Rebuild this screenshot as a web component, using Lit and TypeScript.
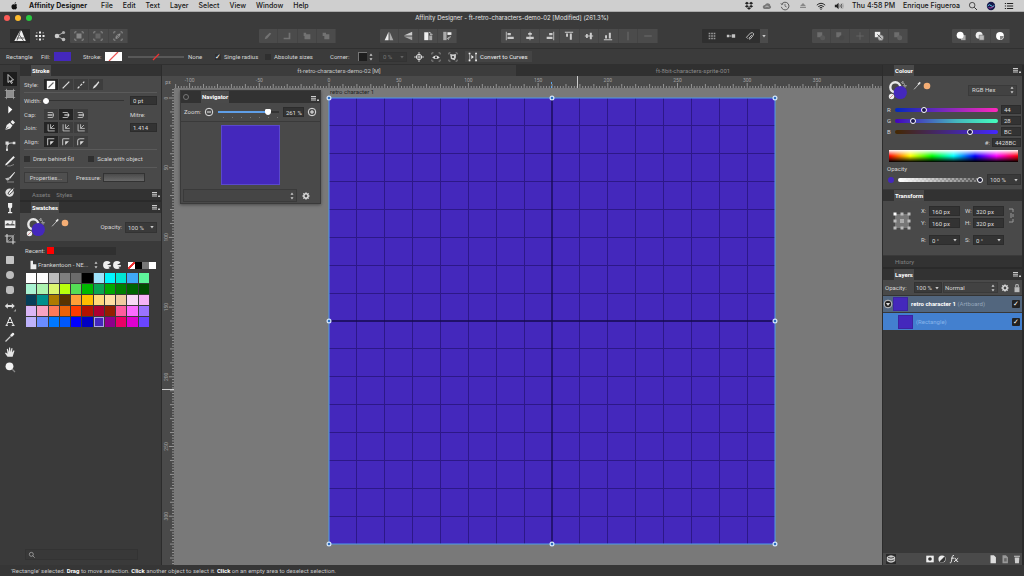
import { LitElement, html, svg, css } from "lit";
import { customElement } from "lit/decorators.js";
import { styleMap } from "lit/directives/style-map.js";
import { classMap } from "lit/directives/class-map.js";

const icon = (body: unknown, box = 12, size = "i12") =>
  html`<svg class="icon ${size}" viewBox="0 0 ${box} ${box}" aria-hidden="true">${body}</svg>`;

const MENUS = ["File", "Edit", "Text", "Layer", "Select", "View", "Window", "Help"];

const PALETTE = [
  "#ffffff", "#fdfdfd", "#bdbdbd", "#7f7f7f", "#6b6b6b", "#000000", "#9fe3fb", "#00f6ff", "#00e6d2", "#3fa9f8", "#5ef59b",
  "#a9f3d2", "#adf3b0", "#dcf66f", "#b9ff0c", "#55dd55", "#00b800", "#0aa552", "#00a800", "#007f00", "#006400", "#004b00",
  "#063f59", "#008f8c", "#ad7b00", "#5a3300", "#ff9f38", "#ffbd00", "#ffd97a", "#ffdfa3", "#f0cba0", "#f8d8f6", "#f5b3f6",
  "#dab6f6", "#f9a3c2", "#ff7a57", "#ea6209", "#ff3a00", "#b31200", "#ab0030", "#931f00", "#ff5b9f", "#fa6bff", "#9a73ff",
  "#bdb2fb", "#6a8cff", "#0078ff", "#0058ff", "#0000ff", "#0000c2", "#4428bc", "#8d008a", "#ea0066", "#dd00cf", "#6a45ff",
];

const shape = (fill: string) => svg`<rect x="2" y="2" width="8" height="8" rx=".8" fill=${fill} />`;

const TOOLS: { name: string; body: unknown }[][] = [
  [
    { name: "Move", body: svg`<path d="M4 1.5v8l2-1.8 1.4 2.8 1-.6L7 7.300l2.500-.3z" fill="#111" stroke="#ddd" stroke-width=".9" />` },
    { name: "Artboard", body: svg`<path d="M2.500 2.500h7v7h-7z" fill="#8f8f8f" /><path d="M2.500 .8v10.400M9.500 .8v10.400M.8 2.500h10.400M.8 9.500h10.400" stroke="#aaa" stroke-width=".7" />` },
    { name: "Node", body: svg`<path d="M4.300 2v7.500l4-4z" fill="#fff" />` },
    { name: "Pen", body: svg`<path d="M1.300 11l1.400-5 3-2.200 2.800 2.700-2.200 3z" fill="#eee" /><path d="M1.500 10.800l3-3" stroke="#333" stroke-width=".7" /><path d="M6.500 3l2-2 2.500 2.500-2 2z" fill="#eee" />` },
  ],
  [
    { name: "Corner", body: svg`<path d="M3 11V7q0-4 4-4h3" fill="none" stroke="#ccc" stroke-width="1.200" /><path d="M1.500 1.500h3.200v3.200H1.500zM8.800 1.700h2.600v2.600H8.800zM2 8.800h2v2H2z" fill="#ddd" />` },
    { name: "Pencil", body: svg`<path d="M1.500 9L9.500 1l1.300 1.500-8 7.500-1.500.6z" fill="#eee" /><path d="M3 11q3 .6 7-1.500" fill="none" stroke="#999" stroke-width=".8" />` },
    { name: "Vector brush", body: svg`<path d="M5 6.800L10.500 1l.6.600-5 6.200z" fill="#eee" /><path d="M1 7.500l2 2q2 .5 2.800-1.700L4.600 6.600z" fill="#bbb" /><path d="M3 11h7" stroke="#999" stroke-width=".8" />` },
    { name: "Paint brush", body: svg`<circle cx="5.600" cy="6.600" r="4.200" fill="#ddd" /><path d="M4 7.500q1-3 6.500-6.500-.5 5-5 7.500z" fill="#eee" stroke="#333" stroke-width=".9" />` },
    { name: "Fill", body: svg`<path d="M4 1h4.200v3.600q0 1.600-1.400 2V10h1.400v1.200H4V10h1.300V6.600q-1.300-.4-1.300-2z" fill="#eee" />` },
    { name: "Place image", body: svg`<path d="M.8 2.500h10.600v7.500H.8z" fill="#eee" /><path d="M1.500 6.500l2.200-1.500 2.300 1.500 2-1.200 2.700 1.200v.9H1.500z" fill="#555" /><circle cx="8.500" cy="4" r=".8" fill="#555" />` },
    { name: "Crop", body: svg`<path d="M3 1v8h8.500M.8 3H9v8.300" fill="none" stroke="#ccc" stroke-width="1.200" /><path d="M3.500 8.500l7-7" stroke="#999" stroke-width=".7" />` },
  ],
  [
    { name: "Rectangle", body: shape("#c4c4c4") },
    { name: "Ellipse", body: svg`<circle cx="6" cy="6" r="4" fill="#bdbdbd" />` },
    { name: "Rounded rectangle", body: svg`<rect x="2" y="2" width="8" height="8" rx="2.400" fill="#bdbdbd" />` },
    { name: "Arrow shape", body: svg`<path d="M.8 6l3-2.800v1.900h4V3.200l3 2.800-3 2.800V7H3.800v1.800z" fill="#ddd" /><path d="M12 9v2.500H9.500z" fill="#999" />` },
    { name: "Text", body: svg`<path d="M6 2L2.500 10.300M6 2l3.500 8.300M3.700 7.500h4.600M1.600 10.400h2.300M7.800 10.400h2.800" fill="none" stroke="#eee" stroke-width="1" />` },
    { name: "Colour picker", body: svg`<path d="M1.500 10.500L6.500 5.500" stroke="#ccc" stroke-width="1.300" /><path d="M6 4.200l1.800 1.800L10.300 3.500 9.900 1.900 8.500 1.700z" fill="#eee" />` },
    { name: "View", body: svg`<path d="M3.500 10.800L1 7.200l.8-.7 1.700 1.200L2.800 3l1-.3L4.900 6 5 1.500h1.100L6.400 6l1.100-4 1 .3L8 6.500l1.700-2.300.8.500L8.600 10.800z" fill="#e6e6e6" />` },
    { name: "Zoom", body: svg`<circle cx="5.500" cy="5.300" r="3.900" fill="#f2f2f2" /><path d="M8 8l3 3" stroke="#888" stroke-width="1.300" />` },
  ],
];

const marquee = svg`<path d="M1 3V1h2M9 1h2v2M11 9v2H9M3 11H1V9" fill="none" stroke="#aaa" stroke-width=".8" />`;
const PX = 1.394;

@customElement("app-root")
export class AppRoot extends LitElement {
  static styles = css`
    :host {
      display: grid;
      grid-template-rows: 12px 12px 25px 16px minmax(0, 1fr) 11px;
      height: 100vh;
      overflow: hidden;
      background: #3a3a3a;
      color: #d6d6d6;
      font: 6px/8px Roboto, "Liberation Sans", sans-serif;
    }
    * { box-sizing: border-box; }
    button, input, select { font: inherit; color: inherit; margin: 0; border: 0; border-radius: 0; padding: 0; background: none; }
    button { display: flex; align-items: center; justify-content: center; }
    select { appearance: none; }
    p, h1, ul { margin: 0; padding: 0; font: inherit; }
    .icon { display: block; flex: none; }
    .i8 { width: 8px; height: 8px; }
    .i10 { width: 10px; height: 10px; }
    .i12 { width: 12px; height: 12px; }
    .i18 { width: 18px; height: 18px; }
    .i20 { width: 20px; height: 20px; }
    .grow { flex: 1; }
    .row { display: flex; align-items: center; }

    .menubar { display: flex; align-items: center; background: #cfcfcf; color: #161616; font: 500 7px/12px Inter, sans-serif; padding: 0 10px 0 9px; border-bottom: 1px solid #aaa; }
    .menubar button { padding: 0 5px; }
    .menubar .app { font-weight: 700; margin: 0 4px 0 5px; }
    .menubar .status { display: flex; align-items: center; gap: 8px; }

    .titlebar { display: grid; grid-template-columns: 1fr auto 1fr; align-items: center; background: #3b3b3b; color: #e4e4e4; }
    .titlebar h1 { font: 6px/8px Inter, sans-serif; }
    .lights { display: flex; gap: 5px; padding-left: 4px; }
    .light { width: 6px; height: 6px; border-radius: 50%; }
    .red { background: #fc5b57; }
    .amber { background: #fdbc2e; }
    .green { background: #28c840; }

    .toolbar { display: flex; align-items: center; background: #3b3b3b; padding: 0 14px 0 10px; border-bottom: 1px solid #303030; }
    .persona { width: 20px; height: 14px; }
    .persona.on { background: #2a2a2a; }
    .group { display: flex; height: 14px; background: #4b4b4b; border-radius: 1px; }
    .group button { flex: 1; border-right: 1px solid #444; }
    .group.dark { background: #2f2f2f; }
    .group.dark button { border: 0; }
    .faded .icon, .faint { opacity: .3; }
    .w3 { width: 58px; }
    .w4 { width: 77px; }
    .w5 { width: 96px; }
    .w8 { width: 157px; }
    .gap { width: 44px; }
    .drop { width: 8px; height: 14px; background: #4b4b4b; }

    .context { display: flex; align-items: center; padding-left: 6px; background: #3b3b3b; border-bottom: 1px solid #303030; }
    .context .name { width: 35px; }
    .context .fill-label { width: 13px; }
    .context .stroke-label { width: 22px; }
    .chip { width: 17px; height: 9px; }
    .chip.fill { background: #4428bc; margin-right: 12px; }
    .none { background: #fff; }
    .line { width: 56px; height: 8px; margin: 0 4px 0 6px; display: block; }
    .context .none-label { width: 27px; }
    .tick { display: flex; align-items: center; gap: 3px; }
    .tick input { appearance: none; width: 6px; height: 6px; background: #2f2f2f; display: grid; place-items: center; }
    .tick input:checked::after { content: "✓"; font: 700 7px/6px "DejaVu Sans", sans-serif; color: #fff; }
    .single { width: 50px; }
    .absolute { width: 65px; }
    .corner-label { width: 28px; }
    .corner { width: 9px; height: 9px; background: #1e1e1e; border-top: 1px solid #777; border-left: 1px solid #777; }
    .steps { width: 12px; }
    .percent { width: 28px; height: 10px; padding-left: 3px; background: #363636; color: #777; border: 1px solid #333; }
    .context .tool { width: 17px; height: 11px; }
    .convert { gap: 2px; padding: 0 4px 0 3px; height: 11px; background: #444; margin-left: 4px; color: #eee; }
    .tools-gap { width: 3px; }

    .work { display: grid; grid-template-columns: 20px 142px minmax(0, 1fr) 142px; min-height: 0; }
    .tools { display: flex; flex-direction: column; gap: 5px; padding-top: 6px; background: #3a3a3a; }
    .tools div { display: grid; grid-auto-rows: 1fr; justify-items: center; align-items: center; }
    .g0 { height: 62px; }
    .g1 { height: 109px; }
    .g2 { height: 123px; }
    .tools button { width: 14px; height: 14px; }
    .tools button.on { background: #1d1d1d; }

    .studio { display: flex; flex-direction: column; min-height: 0; min-width: 0; background: #3a3a3a; border-right: 1px solid #2c2c2c; }
    .tabs { display: flex; align-items: stretch; height: 11px; background: #323232; padding-left: 11px; color: #858585; flex: none; }
    .tabs button { padding: 0 1px; margin-right: 4px; }
    .tabs button.on { background: #4a4a4a; color: #fff; font-weight: 700; }
    .studio .tabs + .tabs { border-top: 2px solid #2a2a2a; height: 13px; }
    .split { height: 1px; background: #5a5a5a; margin: 0 4px; flex: none; }
    .panel { background: #494949; flex: none; }
    .stroke { padding: 1px 4px 0; height: 113px; }
    .stroke .label { width: 20px; }
    .stroke .row { height: 13px; }
    .stroke .row.top { height: 15px; }
    .stroke .row.wide { height: 17px; }
    .stroke .row.width { height: 15px; gap: 2px; }
    .stroke .row.base { height: 19px; }
    .stroke .split { margin: 0; }
    .seg { display: flex; height: 11px; background: #3d3d3d; }
    .seg button { width: 15px; border-right: 1px solid #494949; }
    .seg button.on { background: #252525; }
    .field { height: 9px; background: #333; border: 1px solid #2c2c2c; padding-left: 2px; color: #ddd; min-width: 0; }
    .w27 { width: 27px; }
    .push { background: #4f4f4f; border: 1px solid #3b3b3b; height: 11px; width: 44px; }
    .pressure { width: 42px; height: 9px; background: linear-gradient(#4a4a4a, #696969); border: 1px solid #333; margin-left: 2px; }
    .pressure-label { margin-left: 8px; }

    input[type="range"] { appearance: none; height: 4px; min-width: 0; }
    input[type="range"]::-webkit-slider-thumb { appearance: none; width: 6px; height: 6px; border-radius: 50%; border: 1px solid #fff; background: rgba(20, 20, 50, .8); }
    input.plain { flex: 1; height: 7px; background: linear-gradient(#333, #333) center / 100% 1px no-repeat; margin-right: 4px; }
    input.plain::-webkit-slider-thumb { background: #fff; }

    .wells { display: flex; align-items: center; margin-left: 4px; padding-bottom: 9px; }
    .swatch-top { display: flex; align-items: center; height: 28px; padding: 0 4px 0 6px; }
    .pct { height: 11px; width: 32px; padding-left: 2px; background: #3a3a3a; border: 1px solid #333; }
    .swatches { flex: 1; display: flex; flex-direction: column; padding: 5px 4px 5px 5px; }
    .recent { display: flex; align-items: center; height: 10px; }
    .recent .bar { width: 69px; height: 8px; background: #303030; margin-left: 2px; }
    .recent i { display: block; width: 7px; height: 7px; background: #f00; }
    .library { display: flex; align-items: center; height: 12px; margin: 3px 0 2px; padding: 0 1px 0 3px; }
    .library select { width: 54px; height: 10px; }
    .library .mini { display: flex; margin-left: 6px; }
    .mini i { width: 7px; height: 7px; }
    .palette { display: grid; grid-template-columns: repeat(11, 1fr); grid-auto-rows: 10px; gap: 1px; width: 123px; margin-left: 1px; }
    .palette button.picked { outline: 1px solid #a9a4e6; outline-offset: -1px; }
    .search { display: flex; align-items: center; height: 11px; width: 113px; padding-left: 2px; background: #383838; border: 1px solid #333; }
    .search input { flex: 1; min-width: 0; }

    .doc { display: grid; grid-template: 11px 12px minmax(0, 1fr) / 12px minmax(0, 1fr); min-width: 0; min-height: 0; }
    .doctabs { grid-column: 1 / -1; display: flex; background: #303030; color: #8a8a8a; padding-right: 12px; }
    .doctabs button { flex: 1; }
    .doctabs button.on { background: #3c3c3c; color: #c4c4c4; }
    .unit { background: #4a4a4a; color: #aaa; font-size: 5px; text-align: center; line-height: 12px; }
    .ruler { background: #4a4a4a; width: 100%; height: 100%; display: block; overflow: hidden; }
    .ruler text { fill: #a4a4a4; font: 5px Roboto, sans-serif; }
    .canvas { position: relative; overflow: hidden; background: #797979; }
    .artboard { position: absolute; left: 151px; top: 6px; width: 454px; height: 454px; display: block; }
    .boardname { position: absolute; left: 156px; top: 0; color: #1f1f1f; }
    .navigator { position: absolute; left: 6px; top: 2px; width: 141px; background: #494949; border: 1px solid #3a3a3a; box-shadow: 0 1px 3px rgba(0, 0, 0, .4); }
    .navigator .tabs { padding-left: 1px; gap: 4px; height: 12px; }
    .navigator .tabs .icon { margin-top: 2px; }
    .navigator .tabs .dot { width: 3px; }
    .zoomrow { display: flex; align-items: center; height: 19px; padding: 0 3px; border-bottom: 1px solid #3a3a3a; }
    .zoomrow .label { width: 21px; }
    .zoomrow input[type="range"] {
      width: 64px; height: 11px; margin: 0 4px;
      background:
        linear-gradient(90deg, #5f9fe8 80%, #333 80%) center / 100% 2px no-repeat,
        repeating-linear-gradient(90deg, transparent 0 5px, #777 5px 6px, transparent 6px 9px) bottom / 100% 1px no-repeat;
    }
    .zoomrow input[type="range"]::-webkit-slider-thumb { border-radius: 1px 1px 3px 3px; background: #fff; }
    .zoomrow .field { width: 22px; height: 10px; margin-right: 3px; }
    .preview { display: grid; place-items: center; height: 66px; }
    .preview i { display: block; width: 59px; height: 60px; background: #4428bc; border: 1px solid #5a49cc; }
    .navfoot { display: flex; align-items: center; gap: 4px; padding: 1px 2px; }
    .navfoot select { width: 114px; height: 13px; background: #454545; border: 1px solid #3a3a3a; }
    .overlay { display: grid; align-items: center; justify-items: end; }
    .overlay > * { grid-area: 1 / 1; }
    .overlay .icon { pointer-events: none; margin-right: 1px; }

    .right { border-left: 1px solid #2c2c2c; border-right: 2px solid #2a2a2a; }
    .colour { height: 113px; padding: 0 1px 0 4px; margin-bottom: 1px; }
    .colour .head { display: flex; align-items: center; height: 28px; padding: 0 4px 0 1px; }
    .modes { width: 49px; height: 11px; padding-left: 3px; background: #424242; border: 1px solid #3a3a3a; }
    .channel { display: grid; grid-template-columns: 7px 1fr 20px; column-gap: 1px; align-items: center; height: 11px; }
    .channel .field { width: 20px; }
    .channel input[type="range"] { width: 103px; border-radius: 2px; }
    .ch-r { background: linear-gradient(90deg, #0028bc, #ff28bc); }
    .ch-g { background: linear-gradient(90deg, #4400bc, #44b8bc 60%, #44ffbc); }
    .ch-b { background: linear-gradient(90deg, #442800, #4428ff); }
    .hex { display: flex; align-items: center; justify-content: flex-end; gap: 2px; height: 11px; }
    .hex .field { width: 29px; }
    .spectrum { height: 12px; margin: 2px 3px 3px 2px; background: linear-gradient(#fff, transparent 50%, #000), linear-gradient(90deg, red, #ff0, lime, cyan, blue, #f0f, red); }
    .oplabel { height: 9px; }
    .oprow { display: flex; align-items: center; height: 11px; gap: 4px; padding-left: 1px; }
    .oprow b { width: 6px; height: 6px; border-radius: 50%; background: #4428bc; }
    .oprow input[type="range"] { flex: 1; border-radius: 2px; background: linear-gradient(90deg, #fff, transparent), repeating-conic-gradient(#777 0 25%, #444 0 50%) 0 0 / 4px 4px; }
    .oprow .pct { width: 34px; }
    .transform { display: grid; grid-template-columns: 24px 44px 44px 1fr; height: 54px; padding: 5px 0 0 9px; align-items: start; margin-bottom: 1px; }
    .transform .pair { display: grid; gap: 2px; }
    .transform label { display: grid; grid-template-columns: 8px 31px; align-items: center; height: 10px; justify-content: end; }
    .transform label .field { height: 10px; width: 31px; }
    .transform label:last-child { margin-top: 5px; }
    .transform .anchor { margin-top: 5px; }
    .blend { display: flex; align-items: center; height: 16px; padding-left: 2px; gap: 1px; border-bottom: 1px solid #333; }
    .blend .label { width: 28px; }
    .blend .pct { width: 28px; padding-left: 1px; }
    .blend .mode { width: 55px; height: 11px; padding-left: 1px; background: #424242; border: 1px solid #3a3a3a; }
    .blend > .icon { margin-left: 1px; }
    .layers { flex: 1; list-style: none; background: #383838; }
    .layers li { display: flex; align-items: center; height: 16px; margin-bottom: 1px; padding: 0 2px 0 0; background: #52667e; }
    .layers li.child { background: #4380cf; padding-left: 15px; height: 17px; }
    .layers i { display: block; width: 15px; height: 14px; background: #4428bc; margin: 0 3px 0 0; border: 1px solid #3b25a0; }
    .layers strong { color: #fff; }
    .layers span { color: #95a7bc; }
    .layers .child span { color: #86b4ea; }
    .layers .tick input { width: 8px; height: 8px; background: #222; border-radius: 1px; }
    .foot { display: flex; align-items: center; height: 12px; padding: 0 0 0 3px; background: #4a4a4a; gap: 2px; }
    .foot .left { background: #2b2b2b; }

    .statusbar { display: flex; align-items: center; padding-left: 11px; background: #363636; color: #c8c8c8; }
    .statusbar b { color: #fff; }
  `;

  private steps() {
    return icon(svg`<path d="M4 .5l1.500 2.200h-3zM4 7.500L2.500 5.300h3z" fill="#ccc" />`, 8, "i8");
  }

  private arrow() {
    return icon(svg`<path d="M2.300 3h3.400L4 5.600z" fill="#ccc" />`, 8, "i8");
  }

  private menuIcon() {
    return icon(svg`<path d="M1 3h5v1H1zM1 4.700h5v1H1zM1 6.400h5v1H1zM7 6.500h2v1.600H7z" fill="#ccc" />`, 10, "i10");
  }

  private tabs(names: string[], active: boolean, menu = true) {
    return html`<div class="tabs" role="tablist">
      ${names.map((n) => html`<button role="tab" class=${classMap({ on: active })}>${n}</button>`)}
      <span class="grow"></span>
      ${menu ? this.menuIcon() : ""}
    </div>`;
  }

  private choice(label: string, icons: unknown[], on: number, cls = "") {
    return html`<div class="row ${cls}"><span class="label">${label}</span>
      <div class="seg" role="group" aria-label=${label}>
        ${icons.map((b, i) => html`<button class=${classMap({ on: i === on })} aria-label="${label} ${i + 1}">${icon(b, 12, "i10")}</button>`)}
      </div>
    </div>`;
  }

  private wells() {
    return html`${icon(svg`<circle cx="7.300" cy="7.300" r="5" fill="none" stroke="#e8e8e8" stroke-width="2.400" />
      <path d="M13.500 2.500q3.500 0 3.500 3.500M13.500 2.500l1.500-1.500v3zM17 7.500l-1.500-2h3z" fill="none" stroke="#999" stroke-width=".9" />
      <circle cx="12.300" cy="12.500" r="6.600" fill="#4428bc" /><circle cx="3.500" cy="16.500" r="2.700" fill="#eee" /><path d="M2 18l3-3" stroke="#c66" stroke-width=".7" />`, 20, "i20")}
      <span class="wells">
      ${icon(svg`<path d="M2.500 10l5-5.500" stroke="#bbb" stroke-width="1.200" /><path d="M6.500 3.700L9.300 1l1.200 1.300L8 5.200z" fill="#e5e5e5" />`, 12, "i10")}
      ${icon(svg`<circle cx="5" cy="5" r="3.300" fill="#f5ae75" />`, 10, "i10")}</span>`;
  }

  private menubar() {
    return html`<nav class="menubar">
      ${icon(svg`<path d="M8.300 1.200q.1 1.600-1.600 2.300Q6.500 2 8.300 1.200zM6.500 4.100q1.800-1 3.100.3-1.400 1.300 0 3.400-.9 2.500-2 2.500L6.300 9.900l-1.200.4Q3.300 10 2.900 7.200q0-3.500 2.500-3.200z" fill="#111" />`, 12, "i10")}
      <button class="app">Affinity Designer</button>
      ${MENUS.map((m) => html`<button>${m}</button>`)}
      <span class="grow"></span>
      <div class="status">
        ${icon(svg`<path d="M3.500 1L6 2.800 3.500 4.500 1 2.800zM8.500 1L11 2.800 8.500 4.500 6 2.800zM3.500 4.700L6 6.400 3.500 8.100 1 6.400zM8.500 4.700L11 6.400 8.500 8.100 6 6.400zM6 7.300l2.300 1.600L6 10.500 3.700 8.900z" fill="#222" />`, 12, "i10")}
        ${icon(svg`<path d="M3 9.500Q.5 9 1 6.500 1.600 4.500 3.500 4.700 5 2 8 3q2 .8 2 2.600 1.500 1 .8 2.600-.8 1.300-2.300 1.300z" fill="#777" /><path d="M4 7q2-2 4 0" fill="none" stroke="#ddd" stroke-width=".8" />`, 12, "i10")}
        ${icon(svg`<path d="M2.300 3.500A4.600 4.600 0 1 1 1.600 7" fill="none" stroke="#444" /><path d="M6 3.500V6.200l2 1M1 2.500l1 2 2-1" fill="none" stroke="#444" stroke-width=".8" />`, 12, "i10")}
        ${icon(svg`<path d="M6 2.500l3.500 3.500h-7zM2.500 7h7v1.300h-7z" fill="#888" />`, 12, "i10")}
        ${icon(svg`<path d="M1 5q5-4.500 10 0M2.700 6.800q3.300-3 6.600 0M4.400 8.400q1.600-1.400 3.200 0" fill="none" stroke="#222" stroke-width="1.200" /><circle cx="6" cy="9.800" r=".8" fill="#222" />`, 12, "i10")}
        ${icon(svg`<path d="M1 4.500h2l2.500-2.300v7.600L3 7.500H1z" fill="#222" /><path d="M7 4.200q1 1.800 0 3.600M8.700 3.300q1.600 2.700 0 5.400" fill="none" stroke="#333" stroke-width=".9" /><path d="M10.300 2.500q2 3.500 0 7" fill="none" stroke="#999" stroke-width=".8" />`, 12, "i10")}
        <span>Thu 4:58 PM</span><span>Enrique Figueroa</span>
        ${icon(svg`<circle cx="5" cy="5" r="3.300" fill="none" stroke="#333" /><path d="M7.500 7.500l3.300 3.300" stroke="#333" stroke-width="1.200" />`, 12, "i10")}
        ${icon(svg`<circle cx="6" cy="6" r="5" fill="#16184a" /><path d="M2 6q2-3 4-.5T10 5.500" fill="none" stroke="#5ac8e8" stroke-width="1.200" /><path d="M3 8q3 1.500 6-1.500" fill="none" stroke="#d858c0" stroke-width=".9" />`, 12, "i10")}
        ${icon(svg`<path d="M1 3h1.400M3.500 3h7.500M1 6h1.400M3.500 6h7.500M1 9h1.400M3.500 9h7.500" stroke="#222" stroke-width="1.200" />`, 12, "i10")}
      </div></nav>`;
  }

  private group(cls: string, names: string[], bodies: unknown[], faded: number[] = []) {
    return html`<div class="group ${cls}">${bodies.map((b, i) => html`<button class=${classMap({ faded: faded.includes(i) })} aria-label=${names[i] ?? names[0]}>${icon(b, 12, "i10")}</button>`)}</div>`;
  }

  private toolbar() {
    const two = svg`<path d="M1.500 1.500h6v6h-6z" fill="#bbb" />`;
    return html`<div class="toolbar">
      <button class="persona on" aria-label="Designer persona">${icon(svg`<path d="M6 .7l1.700 0L11.800 11H.3z" fill="#f0f0f0" /><path d="M6.300 1L3 10.500M5 4.500l4.500 6.300M2.600 8h8" stroke="#444" stroke-width=".8" fill="none" />`)}</button>
      <button class="persona" aria-label="Pixel persona">${icon(svg`<path d="M5 5h2v2H5zM5 1.500h2v2H5zM5 8.500h2v2H5zM1.500 5h2v2h-2zM8.500 5h2v2h-2z" fill="#eee" /><path d="M2 2h1.500v1.500H2zM8.500 2H10v1.500H8.500zM2 8.500h1.500V10H2zM8.500 8.500H10V10H8.500z" fill="#888" />`)}</button>
      <button class="persona" aria-label="Export persona">${icon(svg`<path d="M9.500 2.500L3 6l6.500 3.500" fill="none" stroke="#aaa" stroke-width="1" /><circle cx="3" cy="6" r="2.300" fill="#ccc" /><circle cx="9.500" cy="2.500" r="1.600" fill="#aaa" /><circle cx="9.500" cy="9.500" r="1.800" fill="#bbb" />`)}</button>
      ${this.group("w3", ["Selection bounds", "Selection fill", "Selection rotation"], [
        svg`${marquee}<path d="M3 3h6v6H3z" fill="#888" />`,
        svg`${marquee}<path d="M3 3h6v6H3z" fill="#666" />`,
        svg`${marquee}<path d="M3 8.500l6-5M4 9q-1.500-4 4-5.500.8 4-4 5.500z" stroke="#aaa" fill="none" stroke-width=".8" />`])}
      <span class="grow"></span>
      ${this.group("w4", ["Move to back", "Back one", "Forward one", "Move to front"], [
        svg`<path d="M2 10l3-1 5-6-2-1-5 5z" fill="#ccc" />`, svg`<path d="M8 2v6H2v2h8V2z" fill="#ccc" />`,
        svg`<path d="M2 2h3v2h5v6H3V6H2z" fill="#ccc" />`, svg`<path d="M2 2h4v2h4v6H4V6H2z" fill="#ccc" />`], [0, 1, 2, 3])}
      <span class="gap"></span>
      ${this.group("w4", ["Flip horizontal", "Flip vertical", "Rotate left", "Rotate right"], [
        svg`<path d="M5.500 1v10H.8z" fill="#eee" /><path d="M6.700 1v10h4.500z" fill="#aaa" />`,
        svg`<path d="M11 .9v4.600H1z" fill="#ccc" /><path d="M11 6.600v4.500L1 6.600z" fill="#aaa" />`,
        svg`<path d="M1.500 1.500h5v9.500h-5z" fill="#eee" /><path d="M7.500 5.500h3.500V11H7.500z" fill="#aaa" /><path d="M7 1.500q3 0 3 3M8.500 3.500L10 5l1.500-1.500" stroke="#ccc" fill="none" />`,
        svg`<path d="M1.500 1h4v10h-4z" fill="#aaa" /><path d="M6.500 1.500h4.800v3.200H6.500z" fill="#eee" /><path d="M10 6q0 3-3 3M8 7.500L6.500 9 8 10.500" stroke="#ccc" fill="none" />`])}
      <span class="gap"></span>
      ${this.group("w8", ["Align left", "Align centre", "Align right", "Align top", "Align middle", "Align bottom", "Distribute across", "Distribute down"], [
        svg`<path d="M1 1h1v10H1zM3 2.500h4v2.500H3zM3 7h7.500v2.500H3z" fill="#ccc" />`,
        svg`<path d="M5.500 1h1v10h-1zM3.800 2.500h4.400v2H3.800zM1.500 7h9v2.500h-9z" fill="#ccc" />`,
        svg`<path d="M10 1h1v10h-1zM5 2.500h4v2.500H5zM2 7h7v2.500H2z" fill="#ccc" />`,
        svg`<path d="M1 1h10v1H1zM2.500 3h2.300v4H2.500zM7 3h2.400v7.500H7z" fill="#ccc" />`,
        svg`<path d="M1 5.500h10v1H1zM2.500 3.500h2v5h-2zM7 2h2.400v8H7z" fill="#ccc" />`,
        svg`<path d="M1 10h10v1H1zM2.500 5h2.300v4H2.500zM7 2h2.400v7H7z" fill="#ccc" />`,
        svg`<path d="M5.300 1h1.400v10H5.300z" fill="#aaa" />`, svg`<path d="M1.500 5.300h9v1.400h-9z" fill="#aaa" />`], [6, 7])}
      <span class="gap"></span>
      ${this.group("w3 dark", ["Show grid", "Snap to grid", "Snapping"], [
        svg`<path d="M2 2h2v2H2zM5 2h2v2H5zM8 2h2v2H8zM2 5h2v2H2zM5 5h2v2H5zM8 5h2v2H8zM2 8h2v2H2zM5 8h2v2H5zM8 8h2v2H8z" fill="#999" />`,
        svg`<path d="M1 4.500h3v3H1zM4.500 5.500h2v1h-2zM7 4h4v4H7z" fill="#c4c4c4" />`,
        svg`<path d="M3 9L1.800 7.500 6.500 2.500q3-1.500 4 1Q10.500 5 6 10L4.700 8.800 8.300 4.700" fill="none" stroke="#bbb" stroke-width="1.200" />`])}
      <button class="drop" aria-label="Snapping menu">${this.arrow()}</button>
      <span class="gap"></span>
      ${this.group("w5", ["Add", "Subtract", "Intersect", "Divide", "Combine"], [
        svg`${two}<circle cx="8" cy="8" r="3" fill="#777" />`, svg`${two}<circle cx="8" cy="8" r="3" fill="#444" />`,
        svg`<path d="M6 1.500v9M1.500 6h9" stroke="#aaa" />`, svg`<path d="M1 1h6.500v6.500H1z" fill="#eee" /><circle cx="8" cy="8" r="3.400" fill="#bbb" stroke="#555" stroke-width=".6" /><path d="M4 4l5 5" stroke="#444" />`,
        svg`${two}<circle cx="8" cy="8" r="3" fill="#999" />`], [0, 1, 2, 4])}
      <span class="gap"></span>
      ${this.group("w3", ["Insert behind", "Insert on top", "Insert inside"], [
        svg`<path d="M6 5h5.500v6H6z" fill="#aaa" /><circle cx="5" cy="5" r="4.200" fill="#fff" />`,
        svg`<circle cx="5" cy="5" r="4.200" fill="#eee" /><path d="M5 5h6v6H5z" fill="#bbb" stroke="#555" stroke-width=".6" />`,
        svg`<circle cx="6" cy="6" r="4.700" fill="#fff" /><path d="M6 6h4.500q-.5 3.500-4.500 4.500z" fill="#888" />`])}
    </div>`;
  }

  private context() {
    return html`<div class="context">
      <span class="name">Rectangle</span>
      <span class="fill-label">Fill:</span><button class="chip fill" aria-label="Fill colour"></button>
      <span class="stroke-label">Stroke:</span><button class="chip none" aria-label="Stroke colour"><svg class="icon" width="17" height="9" viewBox="0 0 17 9"><path d="M4 9L13 0" stroke="#e55" stroke-width="1.200" /></svg></button>
      <svg class="line" viewBox="0 0 56 8"><path d="M0 4h56" stroke="#777" /><path d="M25 7l6-6" stroke="#e33" stroke-width="1.200" /></svg>
      <span class="none-label">None</span>
      <label class="tick single"><input type="checkbox" checked />Single radius</label>
      <label class="tick absolute"><input type="checkbox" />Absolute sizes</label>
      <span class="corner-label">Corner:</span><button class="corner" aria-label="Corner type"></button>
      <span class="steps">${this.steps()}</span>
      <span class="overlay"><input class="percent" aria-label="Corner size" value="0 %" /><span class="faint">${this.arrow()}</span></span>
      <span class="tools-gap"></span>
      <button class="tool" aria-label="Show origin">${icon(svg`<circle cx="6" cy="6" r="3.200" fill="none" stroke="#eee" /><path d="M6 0v12M0 6h12" stroke="#eee" stroke-width=".9" />`, 12, "i10")}</button>
      <button class="tool" aria-label="Hide selection">${icon(svg`${marquee}<path d="M1.500 6.500q4.500-4.500 9 0-4.500 4-9 0z" fill="#ddd" /><circle cx="6" cy="6.500" r="1.300" fill="#333" />`, 12, "i10")}</button>
      <button class="tool" aria-label="Transform separately">${icon(svg`${marquee}<path d="M2.500 2.500l3.500.5 3.500-.5v4L8 10 3.500 8.500z" fill="#ccc" /><circle cx="6" cy="6" r="1.300" fill="#333" />`, 12, "i10")}</button>
      <button class="convert">${icon(svg`<path d="M2 1v10M9.500 1v10" stroke="#ccc" stroke-width=".9" /><path d="M.8 .8h2v2h-2zM.8 9h2v2h-2zM8.700 .8h2v2h-2zM8.700 9h2v2h-2zM4 3.500L7 6 4 8.500z" fill="#eee" />`, 12, "i10")}Convert to Curves</button>
    </div>`;
  }

  private strokePanel() {
    const cap = (x: number) => svg`<path d="M2 3h6q2.500 3 0 6H2" fill="none" stroke="#bbb" stroke-width="1.100" /><path d="M${x} 6h6" stroke="#eee" stroke-width="1.300" />`;
    const join = svg`<path d="M2.500 1.500v8h8M5.500 1.500v5h5M5.500 6.500l4-4" fill="none" stroke="#bbb" stroke-width="1.100" />`;
    const align = (r: number) => svg`<path d="M2 10V${r + 2}q0-${r} ${r}-${r}H10" fill="none" stroke="#bbb" stroke-width="1.300" /><path d="M5 5h4.500L5 9.500z" fill="#ddd" />`;
    return html`<div class="panel stroke">
      ${this.choice("Style:", [
        svg`<path d="M1 1h10v10H1z" fill="#fff" /><path d="M3 9l6-6" stroke="#666" stroke-width="1.300" />`,
        svg`<path d="M2 10l8-8" stroke="#ddd" stroke-width="1.500" />`,
        svg`<path d="M2 10l8-8" stroke="#ddd" stroke-width="1.500" stroke-dasharray="3 1.500" />`,
        svg`<path d="M2 10.500q1-4 4-5.500L9 1.500l1 1.200L7 7q-2 3-5 3.500z" fill="#ddd" />`], 0, "top")}
      <div class="split"></div>
      <label class="row width"><span>Width:</span><input class="plain" type="range" min="0" max="100" value="0" /><input class="field w27" aria-label="Stroke width" value="0 pt" /></label>
      <div class="row">${this.choice("Cap:", [cap(2), cap(4), cap(3)], 1)}<span class="grow"></span><label class="w27" for="mitre">Mitre:</label></div>
      <div class="row">${this.choice("Join:", [join, join, join], 0)}<span class="grow"></span><input id="mitre" class="field w27" value="1.414" /></div>
      <div class="row top">${this.choice("Align:", [align(0), align(1), align(3)], 0)}</div>
      <div class="split"></div>
      <div class="row wide"><label class="tick"><input type="checkbox" />Draw behind fill</label><span class="grow"></span><label class="tick"><input type="checkbox" />Scale with object</label><span class="grow"></span></div>
      <div class="split"></div>
      <div class="row base"><button class="push">Properties...</button><span class="pressure-label">Pressure:</span><button class="pressure" aria-label="Pressure profile"></button></div>
    </div>`;
  }

  private swatchesPanel() {
    return html`<div class="panel swatch-top">${this.wells()}<span class="grow"></span>
        <label for="swop">Opacity:&nbsp;&nbsp;</label><span class="overlay"><input class="pct" id="swop" value="100 %" />${this.arrow()}</span></div>
      <div class="swatches">
        <div class="recent">Recent:<div class="bar"><i></i></div></div>
        <div class="library">
          ${icon(svg`<path d="M3 1h3v4h4v6H3z" fill="#eee" />`, 12, "i10")}
          <select aria-label="Palette"><option>Frankentoon - NE...</option></select>${this.steps()}
          <span class="grow"></span>
          ${[0, 1].map(() => icon(svg`<circle cx="6" cy="6" r="4.700" fill="#eee" /><path d="M6 6l5-3v3zM7.500 8h3.500v3z" fill="#3a3a3a" />`, 12, "i10"))}
          <span class="mini">${["#fff", "#000", "#777", "#fff"].map((c, i) => html`<i style=${styleMap({ background: i ? c : "linear-gradient(135deg,#fff 42%,#e33 42% 58%,#fff 58%)" })}></i>`)}</span>
        </div>
        <div class="palette">${PALETTE.map((c) => html`<button class=${classMap({ picked: c === "#4428bc" })} aria-label=${c} style=${styleMap({ background: c })}></button>`)}</div>
        <span class="grow"></span>
        <label class="search">${icon(svg`<circle cx="5" cy="5" r="3" fill="none" stroke="#bbb" /><path d="M7 7l3 3" stroke="#bbb" />`, 12, "i8")}<input type="search" aria-label="Search swatches" /></label>
      </div>`;
  }

  private ruler(vertical: boolean) {
    const origin = vertical ? 10 : 155;
    const ticks = [];
    for (let u = -110; u <= 520; u += 2) {
      const p = origin + u * PX;
      const h = u % 50 === 0 ? 5 : u % 10 === 0 ? 4 : 2;
      ticks.push(vertical ? `M${12 - h} ${p}h${h}` : `M${p} ${12 - h}v${h}`);
    }
    const labels = [];
    for (let u = vertical ? 0 : -100; u <= (vertical ? 300 : 350); u += 50) {
      const p = origin + u * PX;
      labels.push(vertical
        ? svg`<text transform="translate(6 ${p}) rotate(-90)" text-anchor="middle">${u}</text>`
        : svg`<text x=${p} y="6" text-anchor="middle">${u}</text>`);
    }
    return html`<svg class="ruler" aria-hidden="true">
      <path d=${ticks.join("")} stroke="#a8a8a8" stroke-width=".8" />${labels}
      ${vertical ? svg`<path d="M0 301.500h12" stroke="#ccc" />` : svg`<path d="M403.500 0v12" stroke="#ccc" /><path d="M377.500 6v2M377.500 10v2" stroke="#5fa8f0" />`}
    </svg>`;
  }

  private artboard() {
    const step = 446 / 16;
    const lines = [];
    for (let i = 1; i < 16; i++) {
      if (i === 8) continue;
      const p = Math.floor(4 + i * step) + 0.5;
      lines.push(`M${p} 4v446M4 ${p}h446`);
    }
    const dots = [[4, 4], [227, 4], [450, 4], [4, 227], [450, 227], [4, 450], [227, 450], [450, 450]];
    return html`<svg class="artboard" viewBox="0 0 454 454" role="img" aria-label="Artboard">
      <path d="M4 4h446v446H4z" fill="#4428bc" />
      <path d=${lines.join("")} stroke="#2d1888" />
      <path d="M227 4v446M4 227h446" stroke="#150a4e" stroke-width="1.300" />
      <path d="M4 4h446v446H4z" fill="none" stroke="#4f9bea" />
      ${dots.map(([x, y]) => svg`<circle cx=${x} cy=${y} r="1.900" fill="#2f6fc0" stroke="#d4e6fb" stroke-width="1.200" />`)}
    </svg>`;
  }

  private navigator() {
    const ring = (plus: boolean) => icon(svg`<circle cx="6" cy="6" r="4.500" fill="none" stroke="#eee" stroke-width="1.100" /><path d=${plus ? "M3.500 6h5M6 3.500v5" : "M3.500 6h5"} stroke="#eee" stroke-width="1.200" />`, 12, "i10");
    return html`<section class="navigator">
      <div class="tabs">${icon(svg`<circle cx="4" cy="4" r="2.500" fill="none" stroke="#777" />`, 8, "i8")}<span class="dot"></span>
        <button class="on">Navigator</button><span class="grow"></span>${this.menuIcon()}</div>
      <div class="zoomrow"><label class="label" for="zoom">Zoom:</label>${ring(false)}<input id="zoom" type="range" min="0" max="100" value="85" /><input class="field" aria-label="Zoom level" value="261 %" />${ring(true)}</div>
      <div class="preview"><i></i></div>
      <div class="navfoot"><span class="overlay"><select aria-label="View point"></select>${this.steps()}</span>${this.gear()}</div>
    </section>`;
  }

  private gear() {
    return icon(svg`<circle cx="6" cy="6" r="2.600" fill="none" stroke="#ddd" stroke-width="1.800" /><path d="M6 1.500v1.500M6 9v1.500M1.500 6h1.500M9 6h1.500M2.800 2.800l1.200 1.200M8 8l1.200 1.200M9.200 2.800L8 4M4 8L2.800 9.200" stroke="#ddd" stroke-width="1.200" />`, 12, "i10");
  }

  private channel(name: string, hex: string) {
    return html`<div class="channel"><label for="c${name}">${name}</label>
      <input id="c${name}" class="ch-${name.toLowerCase()}" type="range" min="0" max="255" .value=${String(parseInt(hex, 16))} />
      <input class="field" aria-label="${name} value" value=${hex} /></div>`;
  }

  private rightStudio() {
    const field = (l: string, v: string, drop = false) => html`<label>${l}<span class="overlay"><input class="field" value=${v} />${drop ? this.arrow() : ""}</span></label>`;
    return html`<aside class="studio right">
      ${this.tabs(["Colour"], true)}
      <div class="panel colour">
        <div class="head">${this.wells()}<span class="grow"></span><span class="overlay"><select class="modes" aria-label="Colour model"><option>RGB Hex</option></select>${this.steps()}</span></div>
        ${this.channel("R", "44")}${this.channel("G", "28")}${this.channel("B", "BC")}
        <label class="hex">#:<input class="field" value="4428BC" /></label>
        <div class="spectrum"></div>
        <div class="oplabel">Opacity</div>
        <div class="oprow"><b></b><input type="range" aria-label="Colour opacity" value="100" /><span class="overlay"><input class="pct" aria-label="Opacity value" value="100 %" />${this.arrow()}</span></div>
      </div>
      ${this.tabs(["Transform"], true, false)}
      <div class="panel transform">
        <span class="anchor">${icon(svg`<path d="M3 3h14v14H3z" fill="#777" /><path d="M8 8h4v4H8z" fill="#aaa" /><path d="M1.500 1.500h3v3h-3z" fill="#fff" /><path d="M8.500 1.500h3v3h-3zM15.500 1.500h3v3h-3zM1.500 8.500h3v3h-3zM15.500 8.500h3v3h-3zM1.500 15.500h3v3h-3zM8.500 15.500h3v3h-3zM15.500 15.500h3v3h-3z" fill="#bbb" />`, 20, "i20")}</span>
        <div class="pair">${field("X:", "160 px")}${field("Y:", "160 px")}${field("R:", "0 °", true)}</div>
        <div class="pair">${field("W:", "320 px")}${field("H:", "320 px")}${field("S:", "0 °", true)}</div>
        ${icon(svg`<path d="M5 3h4v3M9 13v3H5M9 8v3M7 7v5" fill="none" stroke="#999" />`, 18, "i18")}
      </div>
      ${this.tabs(["History"], false, false)}
      ${this.tabs(["Layers"], true)}
      <div class="panel blend"><label class="label" for="lop">Opacity:</label><span class="overlay"><input class="pct" id="lop" value="100 %" />${this.arrow()}</span>
        <span class="overlay"><select class="mode" aria-label="Blend mode"><option>Normal</option></select>${this.steps()}</span>
        ${this.gear()}${icon(svg`<path d="M3 5h6v6H3z" fill="#bbb" /><path d="M4.500 5V2h3v3" fill="none" stroke="#bbb" stroke-width="1.200" />`, 12, "i10")}</div>
      <ul class="layers">
        <li>${icon(svg`<circle cx="6" cy="6" r="4.600" fill="#222" stroke="#ddd" /><path d="M3.500 4.700h5L6 8.500z" fill="#ddd" />`, 12, "i10")}<i></i><p><strong>retro character 1</strong> <span>(Artboard)</span></p><span class="grow"></span><label class="tick"><input type="checkbox" checked aria-label="Show artboard" /></label></li>
        <li class="child"><i></i><span>(Rectangle)</span><span class="grow"></span><label class="tick"><input type="checkbox" checked aria-label="Show rectangle" /></label></li>
      </ul>
      <div class="foot">
        <button class="left" aria-label="Edit all layers">${icon(svg`<path d="M1 3.500q5-4 10 0v5q-5 4-10 0z" fill="#ccc" /><path d="M2.500 4q3.500 2 7 0M2 7q4 2.500 8 0" fill="none" stroke="#333" />`, 12, "i10")}</button>
        <span class="grow"></span>
        <button aria-label="Mask layer">${icon(svg`<path d="M1.500 2h9v8h-9z" fill="#eee" /><circle cx="6" cy="6" r="2.200" fill="#333" />`, 12, "i10")}</button>
        <button aria-label="Adjustments">${icon(svg`<circle cx="6" cy="6" r="4.300" fill="#eee" /><path d="M3 9L9 3q2 3.500-.5 6T3 9z" fill="#333" />`, 12, "i10")}</button>
        <button aria-label="Layer effects">${icon(svg`<path d="M6 2q-1.500-1-2 1L2.700 9.500Q2.200 11 1 10.500M2.500 5h3.500M6.500 5q1.500-.5 2 2t2.500 2M11 5L6 9.500" fill="none" stroke="#eee" stroke-width="1.100" />`, 12, "i10")}</button>
        <span class="grow"></span>
        <button aria-label="Add pixel layer">${icon(svg`<path d="M3 1.500h4l2.500 2.500v7H3z" fill="#ddd" />`, 12, "i10")}</button>
        <button aria-label="Add layer">${icon(svg`<path d="M3 1.500h4l2.500 2.500v7H3z" fill="#999" /><path d="M5 5h3v4H5z" fill="#666" />`, 12, "i10")}</button>
        <button aria-label="Delete layer">${icon(svg`<path d="M2.500 2h7v1.400h-7zM3.200 4.200h5.600L8.300 11H3.700z" fill="#ccc" />`, 12, "i10")}</button>
      </div>
    </aside>`;
  }

  render() {
    return html`${this.menubar()}
      <header class="titlebar"><div class="lights"><span class="light red"></span><span class="light amber"></span><span class="light green"></span></div>
        <h1>Affinity Designer - ft-retro-characters-demo-02 [Modified] (261.3%)</h1><span></span></header>
      ${this.toolbar()}${this.context()}
      <main class="work">
        <div class="tools">${TOOLS.map((g, i) => html`<div class="g${i}">${g.map((t) => html`<button class=${classMap({ on: t.name === "Move" })} aria-label=${t.name}>${icon(t.body)}</button>`)}</div>`)}</div>
        <aside class="studio">
          ${this.tabs(["Stroke"], true, false)}${this.strokePanel()}
          ${this.tabs(["Assets", "Styles"], false)}${this.tabs(["Swatches"], true)}${this.swatchesPanel()}
        </aside>
        <section class="doc">
          <div class="doctabs"><button class="on">ft-retro-characters-demo-02 [M]</button><button>ft-8bit-characters-sprite-001</button></div>
          <span class="unit">px</span>${this.ruler(false)}${this.ruler(true)}
          <div class="canvas"><span class="boardname">retro character 1</span>${this.artboard()}${this.navigator()}</div>
        </section>
        ${this.rightStudio()}
      </main>
      <footer class="statusbar"><p>'Rectangle' selected. <b>Drag</b> to move selection. <b>Click</b> another object to select it. <b>Click</b> on an empty area to deselect selection.</p></footer>`;
  }
}
